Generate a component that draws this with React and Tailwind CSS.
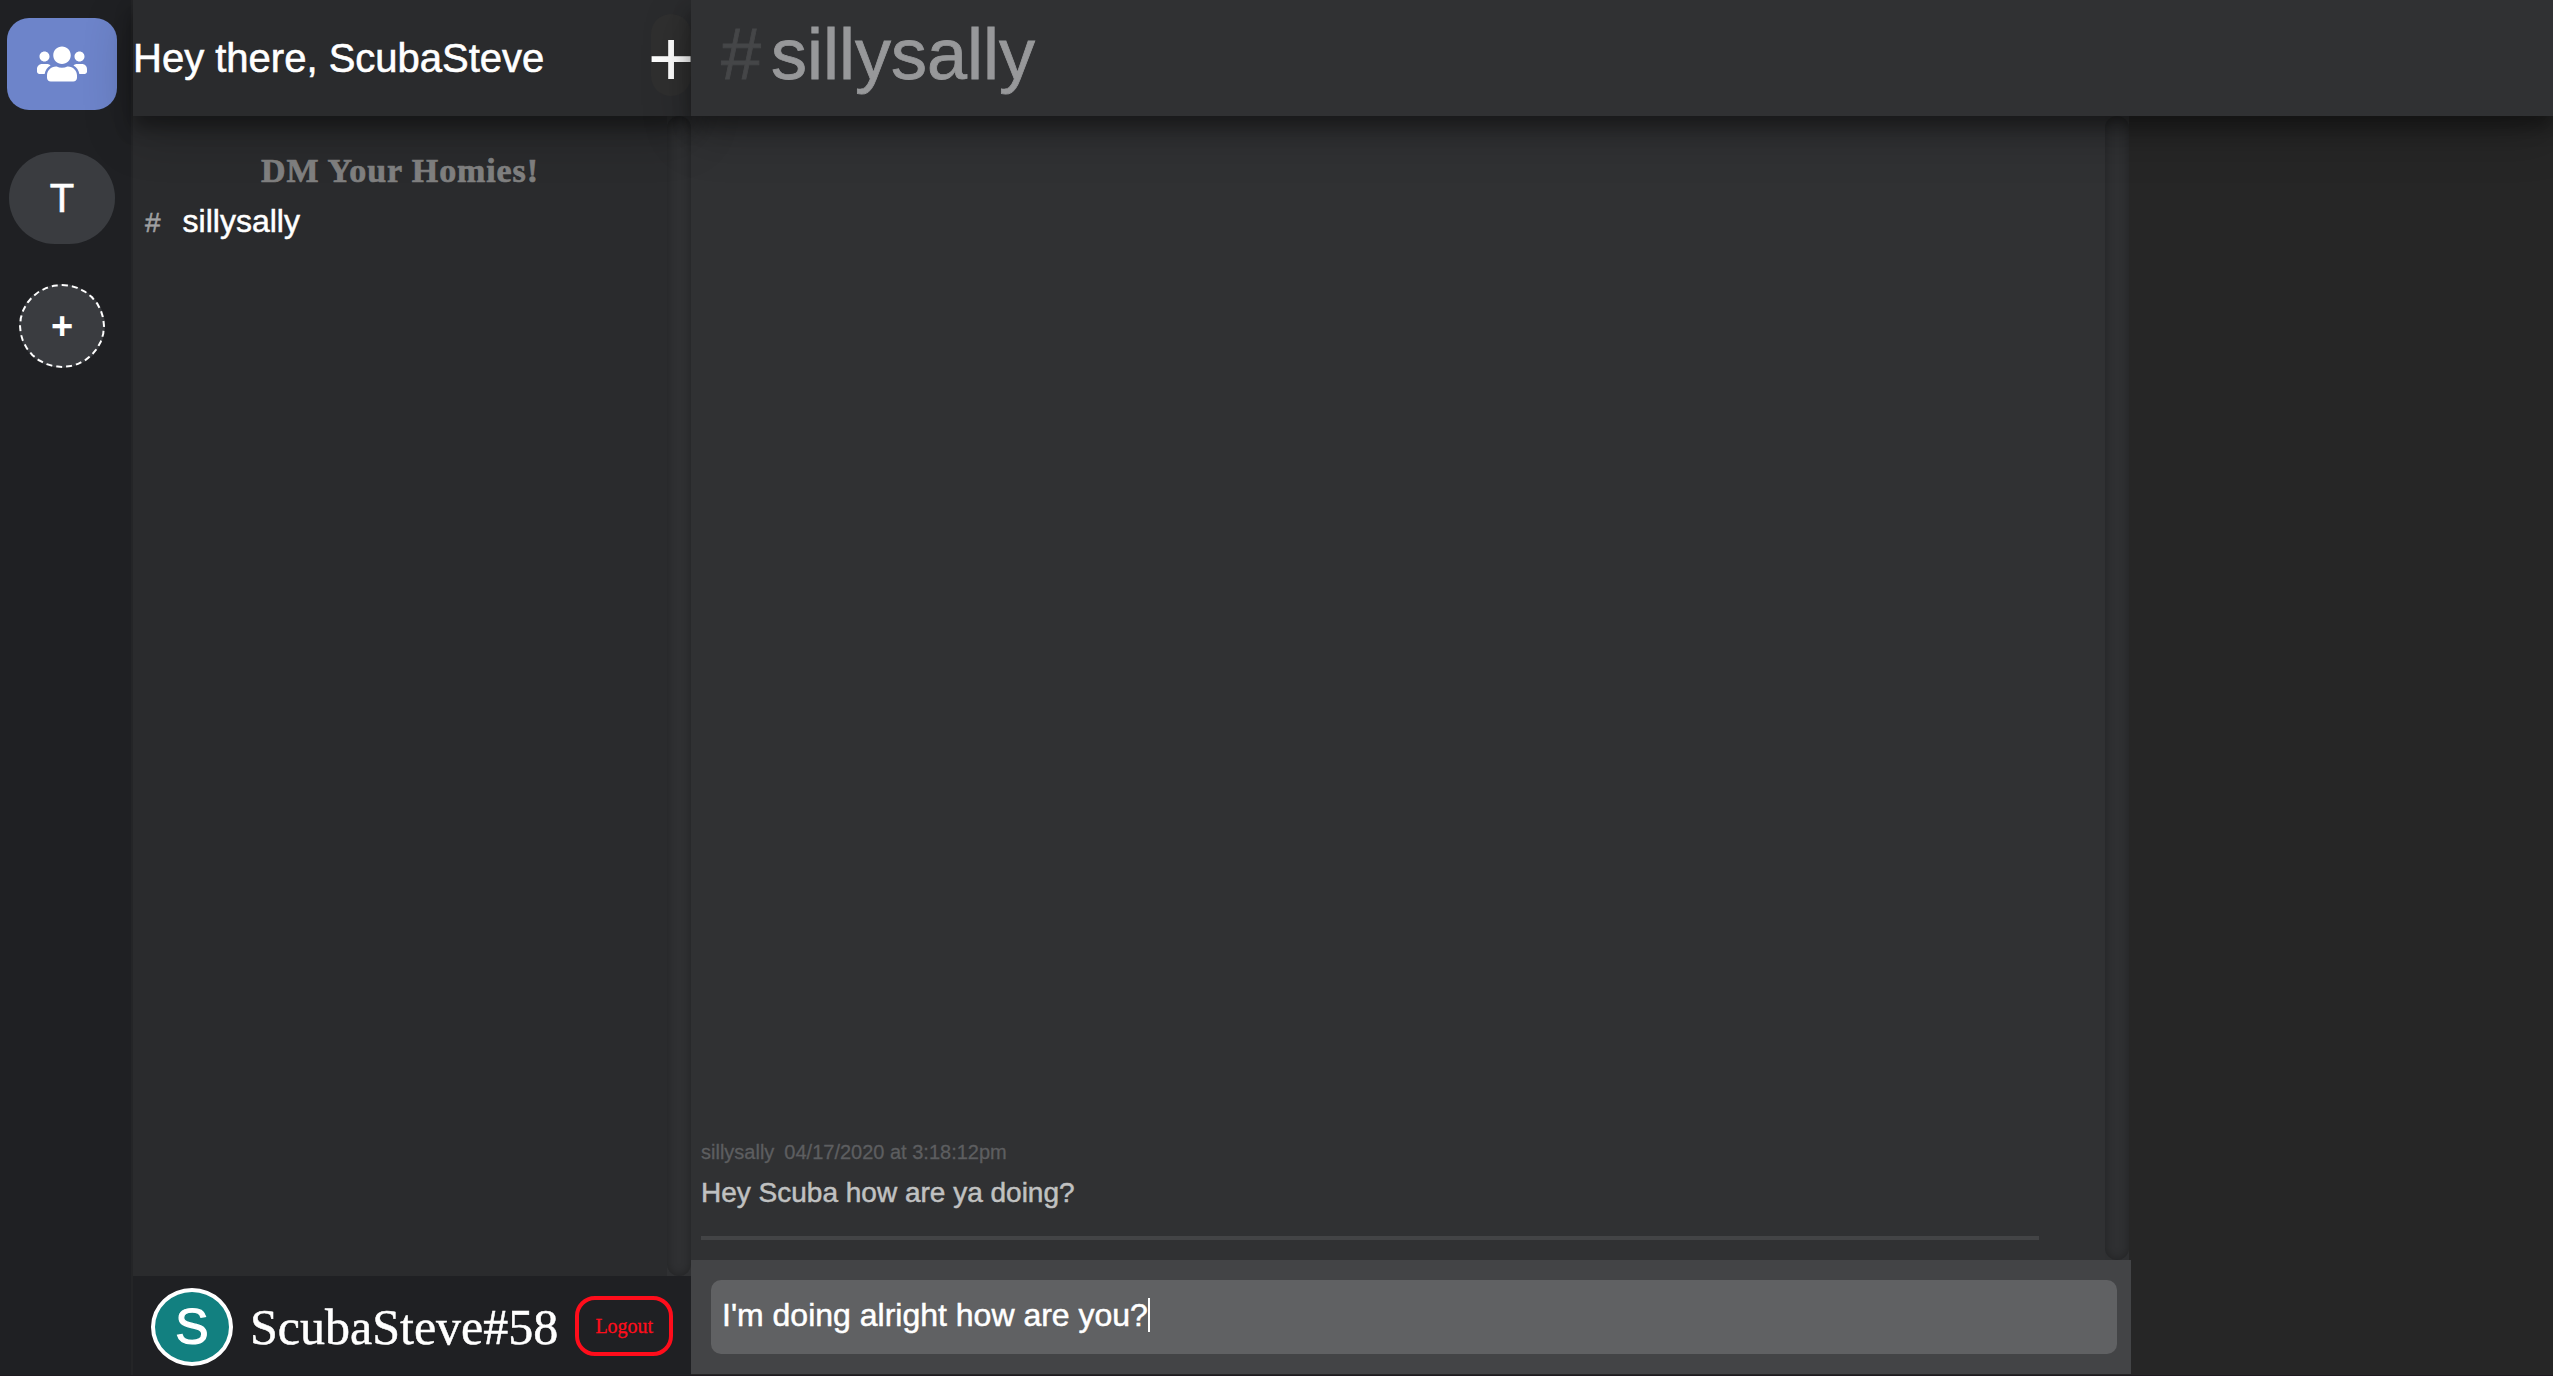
import { FaUsers } from "react-icons/fa";

function ScrollTrack() {
  return (
    <div className="w-6 shrink-0 bg-[#2f3032]">
      <div className="h-full w-full rounded-[12px] bg-[#2f3032] shadow-[inset_0_0_10px_rgba(0,0,0,0.3)]" />
    </div>
  );
}

function ServerRail() {
  return (
    <nav className="flex w-[133px] shrink-0 flex-col border-r-2 border-[#242527] bg-[#1f2023] pt-[18px] pl-[7px] text-white">
      <button className="flex h-[92px] w-[110px] items-center justify-center rounded-[22px] bg-[#6d84ca]">
        <FaUsers className="size-[50px]" />
      </button>
      <button className="mt-[42px] ml-[2px] flex h-[92px] w-[106px] items-center justify-center rounded-[46px] bg-[#3a3c40] text-[40px] [-webkit-text-stroke:0.6px]">
        T
      </button>
      <button className="mt-10 ml-3 flex h-[84px] w-[86px] items-center justify-center rounded-[50%] border-2 border-dashed border-white bg-[#3a3c40] text-[38px] font-bold">
        +
      </button>
    </nav>
  );
}

function Sidebar() {
  return (
    <aside className="flex w-[558px] shrink-0 flex-col bg-[#2a2b2d]">
      <header className="z-10 flex h-[116px] shrink-0 justify-between bg-[#2a2b2d] text-white shadow-[0_12px_16px_rgba(0,0,0,0.34),0_17px_50px_rgba(0,0,0,0.24)]">
        <h1 className="pt-[35px] text-[40px] leading-[46px] [-webkit-text-stroke:0.6px]">Hey there, ScubaSteve</h1>
        <button className="mt-[14px] flex h-[82px] w-10 items-center justify-center rounded-[20px] bg-[#2f2f2f] pt-[7px] text-[80px] leading-[75px]">
          +
        </button>
      </header>
      <div className="flex min-h-0 flex-1">
        <div className="flex-1">
          <h2 className="mt-[36px] text-center font-['Liberation_Serif',serif] text-[34px] leading-[38px] font-bold tracking-[0.9px] text-[#808080] [-webkit-text-stroke:0.7px]">
            DM Your Homies!
          </h2>
          <div className="mt-[12px] flex items-baseline pl-3">
            <span className="text-[28px] leading-[37px] text-[#a0a1a2] [-webkit-text-stroke:0.5px]">#</span>
            <span className="ml-[22px] pt-px text-[32px] leading-[37px] text-white [-webkit-text-stroke:0.5px]">sillysally</span>
          </div>
        </div>
        <ScrollTrack />
      </div>
      <footer className="flex h-[99px] shrink-0 items-center bg-[#1f2023] pl-[18px] font-['Liberation_Serif',serif]">
        <div className="mt-[3px] flex h-[78px] w-[82px] items-center justify-center rounded-[50%] border-4 border-white bg-[#128080] font-['Liberation_Sans',sans-serif] text-[50px] text-white [-webkit-text-stroke:1.2px]">
          S
        </div>
        <span className="mt-[3px] ml-[17px] text-[50px] text-white [-webkit-text-stroke:0.5px]">ScubaSteve#58</span>
        <button className="ml-[17px] h-[60px] w-[98px] rounded-[20px] border-4 border-[#ff0d1b] text-[20px] text-[#ff0d1b] [-webkit-text-stroke:0.3px]">
          Logout
        </button>
      </footer>
    </aside>
  );
}

function Message({ author, time, text }) {
  return (
    <article className="mb-5 ml-[10px] w-[1338px] border-b-4 border-[#434446] pb-[27px]">
      <p className="flex gap-[10px] text-[20px] leading-[23px] text-[#5d5e60] [-webkit-text-stroke:0.3px]">
        <span>{author}</span>
        <time>{time}</time>
      </p>
      <p className="mt-[13px] text-[28px] leading-8 text-[#c0c1c1] [-webkit-text-stroke:0.5px]">{text}</p>
    </article>
  );
}

function Chat() {
  return (
    <main className="flex flex-1 flex-col bg-[#262626] pb-px">
      <header className="z-20 flex h-[116px] shrink-0 gap-[10px] bg-[#303133] pt-[13px] pl-[30px] text-[72px] leading-[82px] text-[#97989a] shadow-[0_12px_16px_rgba(0,0,0,0.34),0_17px_50px_rgba(0,0,0,0.24)] [-webkit-text-stroke:0.8px]">
        <span className="text-[#454648]">#</span>
        <h2>sillysally</h2>
      </header>
      <section className="flex min-h-0 w-[1438px] flex-1 bg-[#303133]">
        <div className="flex flex-1 flex-col justify-end">
          <Message author="sillysally" time="04/17/2020 at 3:18:12pm" text="Hey Scuba how are ya doing?" />
        </div>
        <ScrollTrack />
      </section>
      <footer className="h-[114px] w-[1440px] shrink-0 bg-[#434446] pt-5 pl-5">
        <div className="flex h-[74px] w-[1406px] items-center rounded-[10px] bg-[#606163] pl-[11px] text-[32px] text-white [-webkit-text-stroke:0.5px]">
          <span className="-mt-1">I'm doing alright how are you?</span>
          <span className="-mt-[4px] h-[34px] w-[2px] bg-white" />
        </div>
      </footer>
    </main>
  );
}

export default function App() {
  return (
    <div className="flex h-[1376px] w-[2553px] flex-col overflow-hidden bg-[#1e1a20] font-['Liberation_Sans',Arial,sans-serif]">
      <div className="flex h-[1375px]">
        <ServerRail />
        <Sidebar />
        <Chat />
      </div>
    </div>
  );
}
